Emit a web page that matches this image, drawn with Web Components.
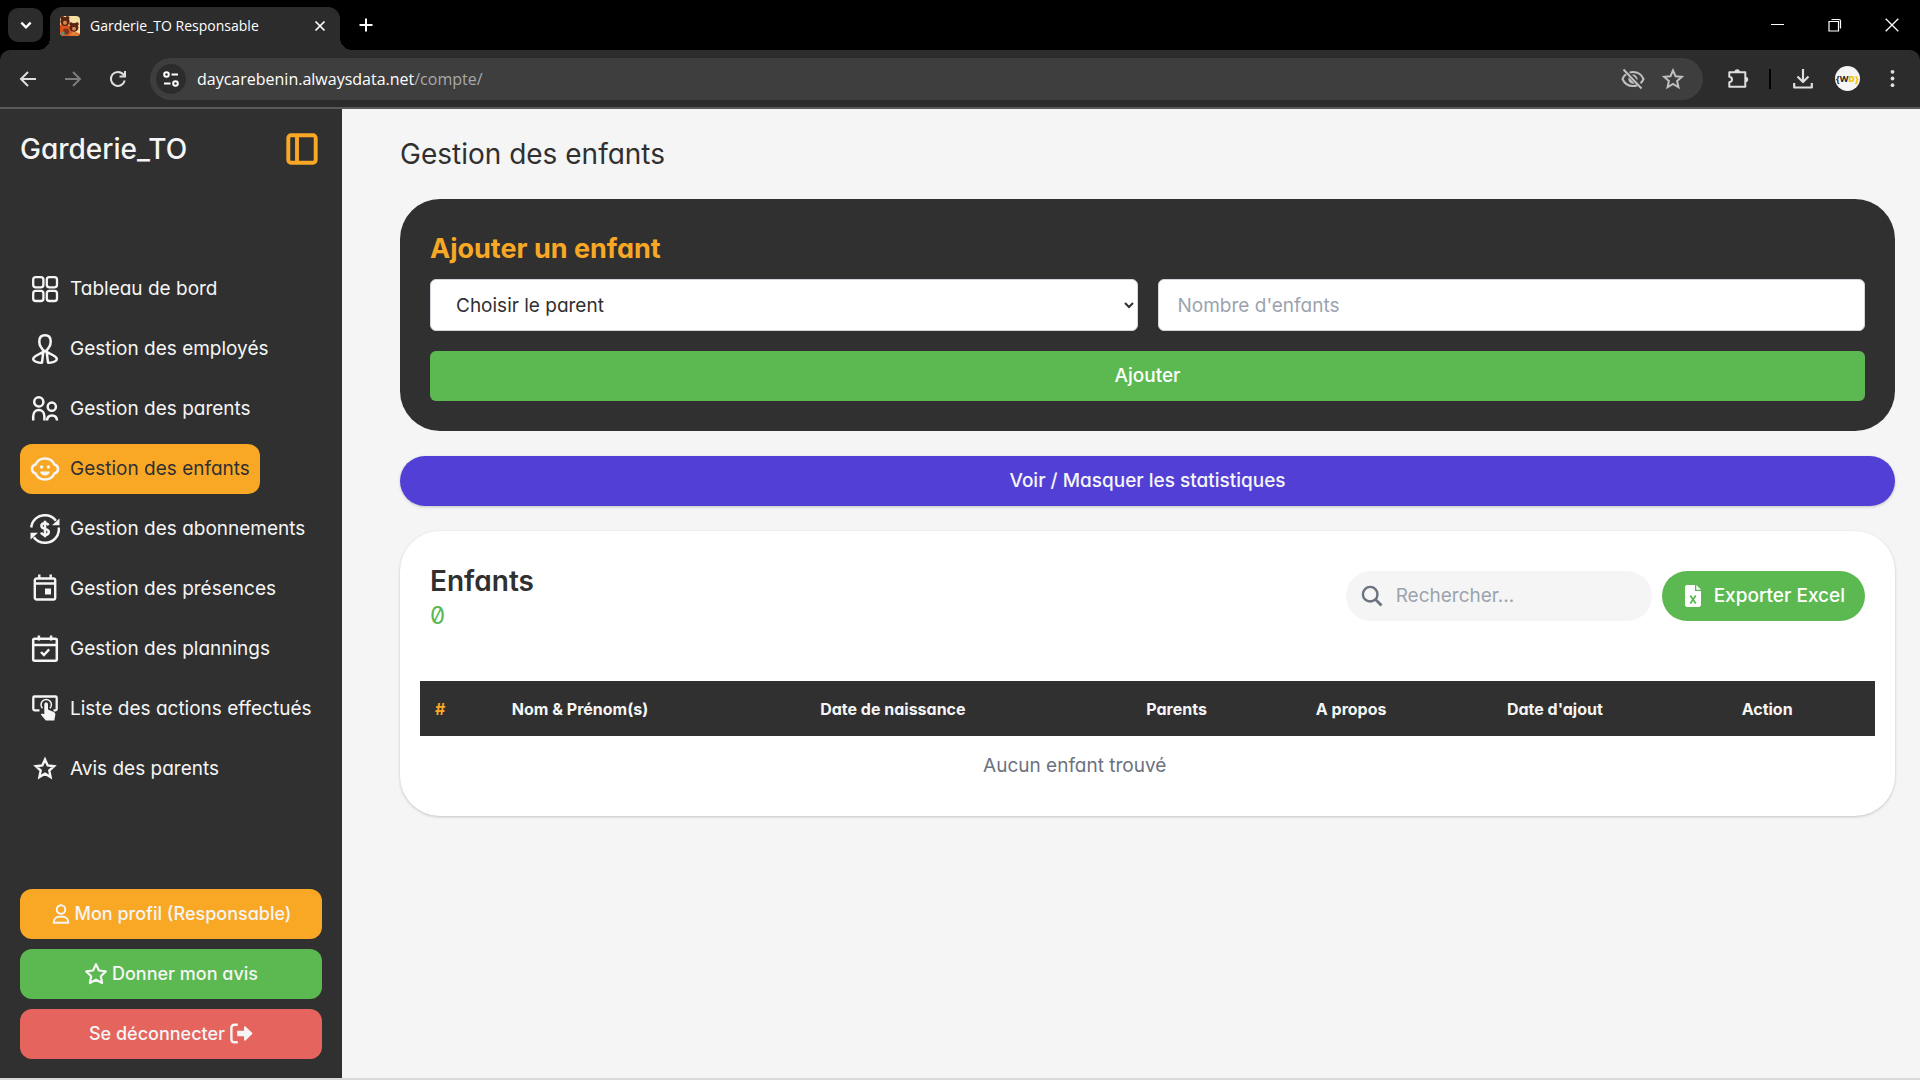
<!DOCTYPE html>
<html lang="fr">
<head>
<meta charset="utf-8">
<title>Garderie_TO Responsable</title>
<style>
  :root {
    --dark: #303030; --light: #f5f5f5; --orange: #f9a826; --green: #5cb951;
    --red: #e5655e; --violet: #5240d6; --muted: #6b7280; --hint: #9ca3af;
  }
  * { box-sizing: border-box; }
  body {
    margin: 0; min-height: 100vh; display: flex; flex-direction: column;
    background: var(--light); color: var(--dark);
    font: 500 18px/30px Inter, "Open Sans", sans-serif;
    font-feature-settings: "cv11", "zero";
  }
  .app { flex: 1; display: flex; border-bottom: 2px solid #d9d9d9; }
  daycare-main { flex: 1; min-width: 0; }
</style>
</head>
<body>
<browser-bar></browser-bar>
<div class="app">
  <daycare-sidebar>
    <nav-item icon="grid">Tableau de bord</nav-item>
    <nav-item icon="employee">Gestion des employés</nav-item>
    <nav-item icon="parents">Gestion des parents</nav-item>
    <nav-item icon="child" active>Gestion des enfants</nav-item>
    <nav-item icon="money">Gestion des abonnements</nav-item>
    <nav-item icon="event">Gestion des présences</nav-item>
    <nav-item icon="planning">Gestion des plannings</nav-item>
    <nav-item icon="touch">Liste des actions effectués</nav-item>
    <nav-item icon="star">Avis des parents</nav-item>
    <action-button slot="footer" tone="orange"><svg-icon slot="before" name="user" size="20"></svg-icon>Mon profil (Responsable)</action-button>
    <action-button slot="footer" tone="green"><svg-icon slot="before" name="starline" size="24"></svg-icon>Donner mon avis</action-button>
    <action-button slot="footer" tone="red">Se déconnecter<svg-icon slot="after" name="logout" size="24"></svg-icon></action-button>
  </daycare-sidebar>
  <daycare-main>
    <child-form></child-form>
    <action-button tone="violet" shape="pill">Voir / Masquer les statistiques</action-button>
    <child-list></child-list>
  </daycare-main>
</div>
<script>
const ICONS = {
  grid: ['0 0 30 30', '<g fill="none" stroke="currentColor" stroke-width="2.3"><rect x="3.2" y="3.2" width="10.2" height="10.2" rx="2.6"/><rect x="16.8" y="3.2" width="10.2" height="10.2" rx="2.6"/><rect x="3.2" y="16.8" width="10.2" height="10.2" rx="2.6"/><rect x="16.8" y="16.8" width="10.2" height="10.2" rx="2.6"/></g>'],
  employee: ['0 0 30 30', '<g fill="none" stroke="currentColor" stroke-width="2.5" stroke-linejoin="round" stroke-linecap="round"><path d="M15 17.6C11 14.5 9.3 11 9.3 7.4 9.3 3.3 11.8 1.3 15 1.3s5.7 2 5.7 6.1c0 3.6-1.7 7.1-5.7 10.200z"/><path d="M13.300 17.800 6.500 21.500C4 22.900 2.600 24.500 3.400 25.900 4.800 27.900 8.500 28.700 12 28.700z"/><path d="M16.700 17.800l6.800 3.700c2.500 1.400 3.900 3 3.100 4.400-1.400 2-5.100 2.800-8.600 2.800z"/></g>'],
  parents: ['0 0 30 30', '<g fill="none" stroke="currentColor" stroke-width="2.5"><circle cx="8.800" cy="7.900" r="4.600"/><circle cx="21.800" cy="12.700" r="4.100"/><path d="M3.200 26.500V22.400C3.200 18.500 5.500 16 8.800 16s5.600 2.500 5.600 6.400V26.500"/><path d="M17 26.500c.2-3.200 2-5 5-5s4.800 1.800 5 5"/></g>'],
  child: ['0 0 30 30', '<path d="M15 4.500c4.500 0 7.800 2.300 9.400 6 2.200.5 3.600 2.200 3.600 4.500s-1.400 4-3.600 4.500c-1.600 3.700-4.900 6-9.400 6s-7.800-2.300-9.400-6C3.400 19 2 17.300 2 15s1.400-4 3.600-4.500c1.600-3.700 4.900-6 9.400-6z" fill="none" stroke="currentColor" stroke-width="2.5"/><circle cx="11.600" cy="13" r="1.700" fill="currentColor"/><circle cx="18.400" cy="13" r="1.700" fill="currentColor"/><path d="M10 17.500h10c-.6 2.500-2.500 4-5 4s-4.400-1.500-5-4z" fill="currentColor"/>'],
  money: ['0 0 30 30', '<g fill="none" stroke="currentColor" stroke-width="2.500"><path d="M1.200 13.500C2 6.300 7.700 1.200 15 1.200c4.600 0 8.400 2.100 10.900 5.500"/><path d="M28.800 13.500c.8 8.500-5.500 15.300-13.800 15.300-4.700 0-8.600-2-11.200-5.600"/><path d="M18.500 11.300c-.6-1.300-1.900-2-3.500-2-2.100 0-3.600 1-3.600 2.700 0 3.900 7.400 1.900 7.400 5.900 0 1.800-1.600 2.900-3.800 2.900-1.900 0-3.300-.8-3.900-2.300M15 6.800v16.400"/></g><path d="M29.500 4.500v6.800H22zM.5 25.500V18.700H8z" fill="currentColor"/>'],
  event: ['0 0 30 30', '<g fill="none" stroke="currentColor" stroke-width="2.400"><rect x="4.800" y="4.500" width="20.400" height="21" rx="1.800"/><path d="M4.800 9.500h20.400M9.300 .5v4M20.700 .5v4"/></g><path d="M15 14.500h6v6h-6z" fill="currentColor"/>'],
  planning: ['0 0 30 30', '<g fill="none" stroke="currentColor" stroke-width="2.500"><rect x="3.200" y="4.700" width="23.600" height="22" rx="1.500"/><path d="M3.200 11h23.600M8.900 1.500v5M21.100 1.500v5"/><path d="M11 18l2.900 3 5.300-5.600"/></g>'],
  touch: ['0 0 30 30', '<path d="M9.500 16.300H4.500c-.7 0-1.200-.5-1.200-1.200V3.700C3.300 3 3.800 2.500 4.500 2.500h21c.7 0 1.200.5 1.200 1.200v11.400c0 .7-.5 1.200-1.200 1.200h-2" fill="none" stroke="currentColor" stroke-width="2.300"/><path d="M12.500 14.300a5.200 5.200 0 1 1 7.400 0" fill="none" stroke="currentColor" stroke-width="1.500"/><path d="M14.300 10.500c0-2.600 3.700-2.600 3.700 0v5l5.600 2.400c1.400.6 2 1.500 1.700 3l-1 5.600h-8.500l-5-6 1.200-1 2.300.8z" fill="currentColor"/>'],
  star: ['0 0 30 30', '<path d="M15 5.500l2.700 6 6.300.7-4.700 4.300 1.300 6.500L15 19.700l-5.600 3.300 1.300-6.500L6 12.200l6.300-.7z" fill="none" stroke="currentColor" stroke-width="2.400"/>'],
  starline: ['0 0 22 22', '<path d="M11 2l2.700 5.800 6.300.8-4.600 4.400 1.200 6.300L11 16.200l-5.600 3.100 1.200-6.300L2 8.600l6.300-.8z" fill="none" stroke="currentColor" stroke-width="2" stroke-linejoin="round"/>'],
  user: ['1 0 18 22', '<g fill="none" stroke="currentColor" stroke-width="2.200"><circle cx="10" cy="6" r="4.700"/><path d="M2 20.500c0-4 2.500-6.500 6-6.500h4c3.500 0 6 2.500 6 6.500z" stroke-linejoin="round"/></g>'],
  logout: ['0 0 22 22', '<path d="M8 2.500H5C3.300 2.500 2.200 3.600 2.200 5.300v10.400c0 1.700 1.100 2.800 2.800 2.800H8" fill="none" stroke="currentColor" stroke-width="2.200"/><path d="M7.500 8h6.300V4.600c0-.7.800-1 1.300-.5l6 5.800c.4.4.4.9 0 1.300l-6 5.800c-.5.5-1.300.2-1.300-.5V13H7.500z" fill="currentColor"/>'],
  panel: ['0 0 32 32', '<g fill="none" stroke="currentColor" stroke-width="3.900"><rect x="2.300" y="2.300" width="27.400" height="27.400" rx="2.600"/><path d="M11 2v28"/></g>'],
  search: ['0 0 22 22', '<circle cx="9.200" cy="9.200" r="7.300" fill="none" stroke="currentColor" stroke-width="2.400"/><path d="M14.500 14.500l6 6" stroke="currentColor" stroke-width="2.800"/>'],
  excel: ['0 0 16 22', '<path d="M2.200 0H10v6h6v13.800c0 1.300-.9 2.200-2.200 2.200H2.200C.9 22 0 21.100 0 19.800V2.200C0 .9.9 0 2.200 0zM11.300 0L16 4.800h-4.700z" fill="currentColor"/><path d="M5.200 10.500l5.600 8M10.800 10.500l-5.600 8" stroke="#5cb951" stroke-width="1.800"/>'],
  chevron: ['0 0 12 12', '<path d="M2 4l4 4 4-4" fill="none" stroke="currentColor" stroke-width="2"/>'],
  close: ['0 0 12 12', '<path d="M1.500 1.500l9 9M10.500 1.500l-9 9" stroke="currentColor" stroke-width="1.700"/>'],
  plus: ['0 0 14 14', '<path d="M7 .5v13M.5 7h13" stroke="currentColor" stroke-width="2"/>'],
  back: ['0 0 18 18', '<path d="M17 9H2.500M9 2L2 9l7 7" fill="none" stroke="currentColor" stroke-width="2"/>'],
  forward: ['0 0 18 18', '<path d="M1 9h14.500M9 2l7 7-7 7" fill="none" stroke="currentColor" stroke-width="2"/>'],
  reload: ['0 0 18 18', '<path d="M15.700 10.500A7 7 0 1 1 14.500 4.700L16 6.300" fill="none" stroke="currentColor" stroke-width="2"/><path d="M17 1v6.500h-6.500v-2H15V1z" fill="currentColor"/>'],
  tune: ['0 0 18 18', '<g fill="none" stroke="currentColor" stroke-width="2"><circle cx="4.500" cy="4.500" r="2.300"/><path d="M9.500 4.500H16M2 13.500h6.500"/><circle cx="13.500" cy="13.500" r="2.300"/></g>'],
  eyeoff: ['0 0 24 24', '<g fill="none" stroke="currentColor" stroke-width="2"><path d="M5 7.200C3.300 8.500 2.200 10 1.500 12c1.800 4.200 5.700 7 10.500 7 1.600 0 3-.3 4.300-.8M8.500 5.600C9.600 5.200 10.800 5 12 5c4.800 0 8.700 2.800 10.500 7-.7 1.700-1.700 3.100-3 4.200"/><path d="M2.500 2.500l18 19"/></g><path d="M7.700 10.300L13.600 16.400A4.600 4.600 0 0 1 7.700 10.300zM11 7.600a4.600 4.600 0 0 1 5.400 5.600l-2-2.300a3 3 0 0 0-2-1.700z" fill="currentColor"/>'],
  bookmark: ['0 0 20 20', '<path d="M10 2.200l2.300 5.300 5.700.5-4.300 3.800 1.300 5.700-5-3-5 3 1.300-5.700L2 8l5.700-.5z" fill="none" stroke="currentColor" stroke-width="1.800"/>'],
  puzzle: ['0 0 22 22', '<path d="M2.300 4.200h16v14.500h-16v-4.500c3.600-.4 3.600-5 0-5.400z" fill="none" stroke="currentColor" stroke-width="2" stroke-linejoin="round"/><path d="M7.500 4a2.700 2.700 0 0 1 5.400 0zM18.500 8.800a2.700 2.700 0 0 1 0 5.400z" fill="currentColor"/>'],
  download: ['0 0 22 22', '<path d="M11 1v12.500M5.500 8.500L11 14l5.500-5.500M2.200 15v4.500h17.600V15" fill="none" stroke="currentColor" stroke-width="2.200" stroke-linejoin="round"/>'],
  dots: ['0 0 20 20', '<g fill="currentColor"><circle cx="10" cy="3" r="2"/><circle cx="10" cy="10" r="2"/><circle cx="10" cy="17" r="2"/></g>'],
  minimize: ['0 0 14 14', '<path d="M0 6.500h13" stroke="currentColor"/>'],
  restore: ['0 0 14 14', '<path d="M1 3.500h9.500V13H1zM3.500 1.500H11c1 0 1.500.5 1.500 1.500v7.500" fill="none" stroke="currentColor" stroke-width="1.200"/>'],
  winclose: ['0 0 14 14', '<path d="M.7.700l12.600 12.600M13.300.700L.7 13.300" stroke="currentColor" stroke-width="1.300"/>'],
  favicon: ['0 0 20 20', '<rect width="20" height="20" rx="4" fill="#f6dfa4"/><path d="M0 9c3-2 8-1 11 2l3 9H4a4 4 0 0 1-4-4z" fill="#d9541c"/><g fill="#5b2412"><circle cx="2.500" cy="2" r="2"/><circle cx="7.500" cy="2" r="2"/><circle cx="5" cy="5.500" r="4.600"/><circle cx="11" cy="8" r="1.800"/><circle cx="17" cy="8" r="1.800"/><circle cx="14" cy="11.500" r="4.400"/></g><path d="M9 20c0-5 10-5 11-1l-4 1z" fill="#e8722a"/><circle cx="6" cy="15.500" r="3" fill="#7b3419"/><g fill="#d98b54"><circle cx="5" cy="6.700" r="2"/><circle cx="14" cy="12.700" r="1.900"/><circle cx="13.500" cy="17.500" r="1.500"/></g><path d="M1 17l3-2 1 4H3z" fill="#4f9a86"/>']
};

function define(tag, template) {
  customElements.define(tag, class extends HTMLElement {
    connectedCallback() {
      if (this.shadowRoot) return;
      const root = this.attachShadow({ mode: 'open' });
      const body = typeof template === 'function' ? template(this) : template;
      root.innerHTML = '<style>*{box-sizing:border-box}button,input,select{font:inherit;font-feature-settings:inherit;color:inherit;border:0;margin:0}button{cursor:pointer}</style>' + body;
    }
  });
}

define('svg-icon', host => {
  const [box, shapes] = ICONS[host.getAttribute('name')];
  const size = host.getAttribute('size') || 30;
  return `<style>:host{display:inline-flex;flex:none}svg{display:block}</style>
  <svg aria-hidden="true" viewBox="${box}" width="${size}" height="${size}">${shapes}</svg>`;
});

define('icon-button', host => `
<style>
  :host { display: inline-flex; flex: none; width: 44px; height: 40px; }
  button { width: 100%; padding: 0; background: none; display: flex; align-items: center; justify-content: center; }
</style>
<button aria-label="${host.getAttribute('label')}"><svg-icon name="${host.getAttribute('icon')}" size="${host.getAttribute('size')}"></svg-icon></button>`);

define('action-button', `
<style>
  :host { display: block; }
  button { width: 100%; height: 50px; padding: 0 20px; border-radius: 12px; background: var(--green); color: var(--light); display: flex; align-items: center; justify-content: center; gap: 4px; }
  :host([tone=orange]) button { background: var(--orange); }
  :host([tone=red]) button { background: var(--red); }
  :host([tone=violet]) button { background: var(--violet); box-shadow: 0 1px 3px #0003; }
  :host([shape=pill]) button { border-radius: 25px; }
  :host([shape=field]) button { border-radius: 6px; color: #fff; }
  :host([shape=export]) button { border-radius: 25px; color: #fff; gap: 10px; }
</style>
<button><slot name="before"></slot><span><slot></slot></span><slot name="after"></slot></button>`);

define('nav-item', host => `
<style>
  :host { display: flex; }
  a { display: flex; align-items: center; gap: 10px; height: 50px; padding: 0 10px; border-radius: 12px; color: var(--light); font-size: 19px; font-weight: 400; text-decoration: none; white-space: nowrap; }
  :host([active]) a { background: var(--orange); }
  :host([active]) span { color: var(--dark); }
</style>
<a href="#"><svg-icon name="${host.getAttribute('icon')}"></svg-icon><span><slot></slot></span></a>`);

define('daycare-sidebar', `
<style>
  :host { flex: none; width: 342px; padding: 20px 20px 19px; display: flex; flex-direction: column; background: var(--dark); color: var(--light); }
  header { display: flex; align-items: center; justify-content: space-between; height: 40px; font-size: 28px; }
  header icon-button { width: 40px; color: var(--orange); }
  nav { flex: 1; display: flex; flex-direction: column; justify-content: center; gap: 10px; }
  footer { display: flex; flex-direction: column; gap: 10px; }
</style>
<header><span>Garderie_TO</span><icon-button icon="panel" size="32" label="Réduire le menu"></icon-button></header>
<nav><slot></slot></nav>
<footer><slot name="footer"></slot></footer>`);

define('daycare-main', `
<style>
  :host { padding: 30px 25px 30px 58px; display: flex; flex-direction: column; gap: 25px; font-size: 19px; }
  h1 { margin: 0 0 5px; font-size: 28px; line-height: 30px; font-weight: 400; }
</style>
<h1>Gestion des enfants</h1>
<slot></slot>`);

define('child-form', `
<style>
  :host { display: block; padding: 30px; border-radius: 40px; background: var(--dark); }
  h2 { margin: 0 0 10px; font-size: 27px; line-height: 40px; font-weight: 700; color: var(--orange); }
  .fields { display: grid; grid-template-columns: 1fr 1fr; gap: 20px; margin-bottom: 20px; }
  select, input { width: 100%; height: 52px; border: 1px solid #d1d5db; border-radius: 6px; background: #fff; color: var(--dark); font-weight: 400; }
  select { padding: 0 0 0 21px; }
  input { padding: 0 19px; }
  input::placeholder { color: var(--hint); }
</style>
<h2>Ajouter un enfant</h2>
<form onsubmit="return false">
  <div class="fields">
    <select aria-label="Parent"><option>Choisir le parent</option></select>
    <input type="text" inputmode="numeric" aria-label="Nombre d'enfants" placeholder="Nombre d'enfants">
  </div>
  <action-button shape="field">Ajouter</action-button>
</form>`);

define('child-list', `
<style>
  :host { display: block; padding: 30px 20px 20px; border-radius: 40px; background: #fff; box-shadow: 0 1px 3px #0003; }
  .head { display: flex; align-items: center; gap: 10px; padding: 0 10px; margin-bottom: 50px; }
  .title { flex: 1; }
  h2 { margin: 0; font-size: 28px; line-height: 40px; font-weight: 600; }
  .count { margin: 0; font-size: 24px; line-height: 30px; color: var(--green); font-weight: 400; }
  .search { display: flex; align-items: center; gap: 13px; width: 306px; height: 50px; padding: 0 15px; border-radius: 25px; background: var(--light); color: var(--muted); }
  input { flex: 1; min-width: 0; padding: 0; background: none; outline: 0; font-weight: 400; }
  input::placeholder { color: var(--hint); }
  table { width: 100%; table-layout: fixed; border-collapse: collapse; }
  th { height: 55px; padding: 0; background: var(--dark); color: var(--light); font-size: 16px; font-weight: 700; }
  th:first-child { padding-left: 15px; text-align: left; color: var(--orange); }
  th:last-child { padding-right: 12px; }
  td { height: 60px; padding: 0; text-align: center; color: var(--muted); font-weight: 400; }
</style>
<div class="head">
  <div class="title"><h2>Enfants</h2><p class="count">0</p></div>
  <label class="search"><svg-icon name="search" size="22"></svg-icon><input type="search" aria-label="Rechercher" placeholder="Rechercher..."></label>
  <action-button shape="export"><svg-icon slot="before" name="excel" size="22"></svg-icon>Exporter Excel</action-button>
</div>
<table>
  <colgroup><col style="width:3%"><col style="width:16%"><col style="width:27%"><col style="width:12%"><col style="width:12%"><col style="width:16%"><col style="width:4%"><col style="width:10%"></colgroup>
  <thead><tr><th>#</th><th>Nom &amp; Prénom(s)</th><th>Date de naissance</th><th>Parents</th><th>A propos</th><th>Date d'ajout</th><th colspan="2">Action</th></tr></thead>
  <tbody><tr><td colspan="7">Aucun enfant trouvé</td></tr></tbody>
</table>`);

define('browser-bar', `
<style>
  :host { display: block; background: #000; color: #fff; font: 400 16px/22px "Open Sans", sans-serif; }
  .strip { height: 50px; display: flex; align-items: center; padding: 0 0 0 8px; }
  .menu { width: 35px; height: 34px; border-radius: 10px; background: #2c2c2c; }
  .tab { position: relative; display: flex; align-items: center; gap: 10px; align-self: flex-end; width: 290px; height: 43px; margin-left: 7px; padding: 0 0 5px 10px; border-radius: 12px 12px 0 0; background: #2c2c2c; font-size: 14px; }
  .tab::before, .tab::after { content: ""; position: absolute; bottom: 0; width: 12px; height: 12px; }
  .tab::before { left: -12px; background: radial-gradient(circle at 0 0, #0000 12px, #2c2c2c 12px); }
  .tab::after { right: -12px; background: radial-gradient(circle at 100% 0, #0000 12px, #2c2c2c 12px); }
  .name { flex: 1; }
  .tab icon-button { height: 30px; width: 41px; }
  .new { width: 52px; }
  .window { margin-left: auto; display: flex; }
  .window icon-button { width: 57px; }
  .bar { height: 59px; display: flex; align-items: center; padding: 0 5px; border-bottom: 2px solid #5a5a5a; border-radius: 10px 10px 0 0; background: #2c2c2c; color: #dedede; }
  .bar > icon-button { width: 45px; }
  .off { color: #7c7c7c; }
  .url { flex: 1; height: 42px; margin: 0 12px 0 10px; padding: 0 10px 0 6px; display: flex; align-items: center; border-radius: 21px; background: #3e3e3e; }
  .site { width: 30px; height: 30px; border-radius: 50%; background: #2c2c2c; color: #fff; }
  .url p { flex: 1; margin: 0 0 0 11px; color: #fff; }
  .url p span { color: #a9a9a9; }
  .url > .end { width: 40px; color: #c0c0c0; }
  .sep { width: 2px; height: 20px; margin: 0 9px; background: #000; }
  .avatar { width: 25px; height: 25px; margin: 0 10px; border-radius: 50%; background: #f5f5f5; color: #222; font: 700 9px/25px "Open Sans", sans-serif; text-align: center; white-space: nowrap; }
  .avatar b { color: #f1c40f; }
</style>
<div class="strip">
  <icon-button class="menu" icon="chevron" size="14" label="Rechercher des onglets"></icon-button>
  <div class="tab"><svg-icon name="favicon" size="20"></svg-icon><span class="name">Garderie_TO Responsable</span><icon-button icon="close" size="12" label="Fermer"></icon-button></div>
  <icon-button class="new" icon="plus" size="14" label="Nouvel onglet"></icon-button>
  <div class="window">
    <icon-button icon="minimize" size="14" label="Réduire"></icon-button>
    <icon-button icon="restore" size="14" label="Niveau inférieur"></icon-button>
    <icon-button icon="winclose" size="14" label="Fermer la fenêtre"></icon-button>
  </div>
</div>
<div class="bar">
  <icon-button icon="back" size="18" label="Retour"></icon-button>
  <icon-button class="off" icon="forward" size="18" label="Avancer"></icon-button>
  <icon-button icon="reload" size="18" label="Actualiser"></icon-button>
  <div class="url">
    <icon-button class="site" icon="tune" size="18" label="Informations du site"></icon-button>
    <p>daycarebenin.alwaysdata.net<span>/compte/</span></p>
    <icon-button class="end" icon="eyeoff" size="24" label="Suivi bloqué"></icon-button>
    <icon-button class="end" icon="bookmark" size="22" label="Favori"></icon-button>
  </div>
  <icon-button icon="puzzle" size="22" label="Extensions"></icon-button>
  <span class="sep"></span>
  <icon-button icon="download" size="22" label="Téléchargements"></icon-button>
  <div class="avatar">{W<b>D}</b></div>
  <icon-button icon="dots" size="19" label="Menu"></icon-button>
</div>`);
</script>
</body>
</html>
